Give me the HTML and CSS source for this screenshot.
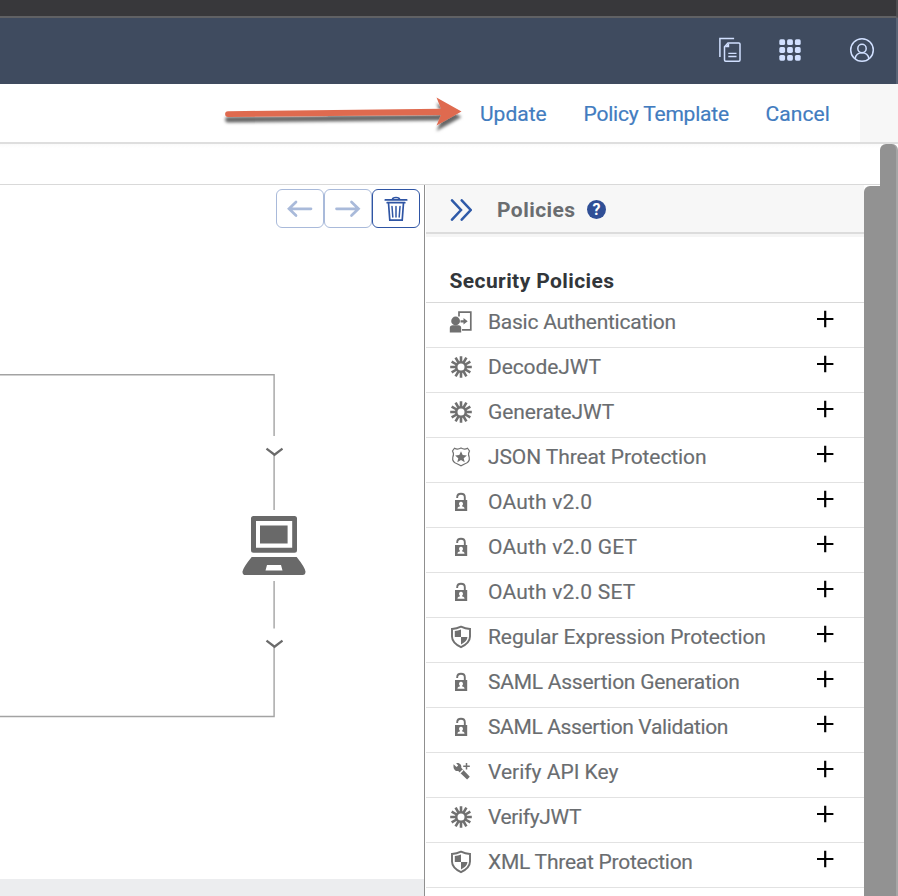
FILE: index.html
```
<!DOCTYPE html>
<html lang="en">
<head>
<meta charset="utf-8">
<title>Policy Editor</title>
<link rel="stylesheet" href="styles.css">
</head>
<body>
<svg class="defs" width="0" height="0" aria-hidden="true">
  <symbol id="auth" viewBox="0 0 24 24"><path d="M10 6.500V2.200h11.800v17.600H13" fill="none" stroke="currentColor" stroke-width="1.700"/><circle cx="6.600" cy="11" r="4.400"/><path d="M.8 22.500V18c0-2 1.200-2.800 3-2.800h5.700c1.700 0 2.700.8 2.700 2.800v4.500zM11.500 10.200h3V8l4.200 3.300-4.200 3.300v-2.200h-3z"/></symbol>
  <symbol id="burst" viewBox="0 0 24 24"><circle cx="12" cy="12" r="4.800" fill="none" stroke="currentColor" stroke-width="2.600"/><path d="M12 1.200V7M12 17v5.800M1.200 12H7M17 12h5.800M6.600 2.650l2.900 5M14.500 16.350l2.900 5M17.400 2.650l-2.900 5M9.500 16.350l-2.900 5M2.650 6.600l5 2.900M16.350 14.500l5 2.900M21.350 6.600l-5 2.900M7.650 14.500l-5 2.900" fill="none" stroke="currentColor" stroke-width="2.600"/></symbol>
  <symbol id="badge" viewBox="0 0 24 24"><path d="M5.500 3.200Q8.500 5 12 3q3.500 2 6.500.2L20.500 6q-1.800 2.700-.3 6.300c.8 3.700-1.600 5.600-4.700 6.700L12 20.800 8.500 19c-3.100-1.100-5.500-3-4.700-6.700Q5.300 8.700 3.500 6z" fill="none" stroke="currentColor" stroke-width="1.200"/><path d="m12 6.300 1.700 3.700 4.200.4-3.200 2.800 1 4-3.700-2.100-3.700 2.100 1-4-3.200-2.800 4.200-.4z"/></symbol>
  <symbol id="lock" viewBox="0 0 24 24"><path d="M8.200 8V7.200c0-4.700 7.600-4.700 7.600 0V10" fill="none" stroke="currentColor" stroke-width="1.900"/><path fill-rule="evenodd" d="M6 10h12.200v11H6zM12 11.800a2 2 0 0 0-1.200 3.600v1.200c-1.600.2-2.300.8-2.300 2.200h7c0-1.400-.7-2-2.300-2.200v-1.200a2 2 0 0 0-1.200-3.600z"/></symbol>
  <symbol id="shield" viewBox="0 0 24 24"><path d="M12 1.700q4.300 2.100 9 2.300v7.500c0 5.500-4.500 8.500-9 10.700-4.500-2.200-9-5.200-9-10.700V4q4.700-.2 9-2.300z" fill="none" stroke="currentColor" stroke-width="1.900"/><path d="M5.800 6q3.200-.3 6.200-1.500V12H5.800zM12 12h6.400c-.2 3.800-3.200 5.800-6.400 7.400z"/></symbol>
  <symbol id="tools" viewBox="0 0 24 24"><path d="M4.600 4.200 7.500 7l1.700-1.600-2-2.200c2.700-.6 5.600 1 5.100 4.500l8.500 9-2.700 2.900-8.900-8.700c-2.800.6-5.400-1.600-4.600-6.700z"/><path d="M17.500 3v6.600M14.200 6.300h6.600" stroke="currentColor" stroke-width="1.500"/><path d="m11 13 3-3" stroke="#fff" stroke-width="1.500"/></symbol>
  <symbol id="plus" viewBox="0 0 18 18"><path d="M9.200 .8v16.400M1 9h16.400" stroke="#000" stroke-width="2.200"/></symbol>
</svg>
<div class="window-bar"></div>
<header class="shell">
  <svg width="24" height="26" viewBox="0 0 24 26"><path d="M.9 20V1.400h14.200M9 5.900h10.800q1.200 0 1.200 1.200v16q0 1.200-1.200 1.200H6.700q-1.200 0-1.200-1.200V9.700z" fill="none" stroke="currentColor" stroke-width="1.500"/><path d="M10.200 5.900v4.300H5.500z"/><path d="M9.300 16.300h8.200M9.300 19.500h8.200" stroke="currentColor" stroke-width="1.300"/></svg>
  <svg class="grid-icon" width="22" height="22" viewBox="0 0 22 22"><rect x=".3" y=".3" width="5.800" height="5.800" rx="1.600"/><rect x="8.100" y=".3" width="5.800" height="5.800" rx="1.600"/><rect x="15.900" y=".3" width="5.800" height="5.800" rx="1.600"/><rect x=".3" y="8.100" width="5.800" height="5.800" rx="1.600"/><rect x="8.100" y="8.100" width="5.800" height="5.800" rx="1.600"/><rect x="15.900" y="8.100" width="5.800" height="5.800" rx="1.600"/><rect x=".3" y="15.900" width="5.800" height="5.800" rx="1.600"/><rect x="8.100" y="15.900" width="5.800" height="5.800" rx="1.600"/><rect x="15.900" y="15.900" width="5.800" height="5.800" rx="1.600"/></svg>
  <svg class="user-icon" width="26" height="26" viewBox="0 0 26 26"><circle cx="13" cy="13" r="11.300"/><circle cx="13" cy="11.500" r="4.200"/><path d="M6 21.800q1.200-6 7-6t7 6"/></svg>
</header>
<nav class="actions">
  <div class="actions-main">
    <svg class="arrow" width="250" height="48" viewBox="0 0 250 48"><defs><filter id="sh" x="-5%" y="-30%" width="110%" height="180%"><feDropShadow dx="0" dy="5.500" stdDeviation="1.400" flood-color="#000" flood-opacity=".6"/></filter></defs><path filter="url(#sh)" fill="#df6b50" d="M8 19.200 221 16.700 216.500 5.500 241.500 19.500 216.500 33.500 221 23 8 25a2.900 2.900 0 0 1 0-5.800z"/></svg>
    <a class="update">Update</a><a class="template">Policy Template</a><a class="cancel">Cancel</a>
  </div>
</nav>
<main class="workspace">
  <div class="page">
    <div class="strip"></div>
    <div class="editor">
      <section class="canvas">
        <div class="buttons">
          <button class="off"><svg width="26" height="20" viewBox="0 0 26 20"><path d="M9 3 2 9.800l7 6.700M2 9.800h22"/></svg></button>
          <button class="off"><svg width="26" height="20" viewBox="0 0 26 20"><path d="m16.500 3 7 6.800-7 6.700M23.500 9.800h-22"/></svg></button>
          <button><svg width="24" height="26" viewBox="0 0 24 26"><path d="M1.300 3.900h21.400M8.500 3.500q0-2 3.500-2t3.500 2" stroke-width="1.700"/><path d="M3.200 6.700h17.600M4.500 7l1.300 17.200h12.400L19.500 7" stroke-width="1.700"/><path d="m8 10.500.8 10.500M12 10.500V21M16 10.500 15.200 21" stroke-width="1.500"/></svg></button>
        </div>
        <svg class="flow" width="424" height="650" viewBox="0 229 424 650">
          <path d="M0 374.700h274.100V436M274.100 455v55M274.100 581v47.500M274.100 647v69.500H0" fill="none" stroke="#a3a3a3" stroke-width="1.400"/>
          <path d="m266.500 448.700 8 6 8-6M266.500 640.700l8 6 8-6" fill="none" stroke="#6b6b6b" stroke-width="2.300"/>
          <g fill="#696969"><path fill-rule="evenodd" d="M253.500 516h41q2.500 0 2.500 2.500v31.700q0 2.500-2.500 2.500h-41q-2.500 0-2.500-2.500v-31.700q0-2.500 2.500-2.500zM256 521v26.700h36.200V521z"/><path d="M260 525.500h27.600v18H260z"/><path fill-rule="evenodd" d="M251.700 557h45q8 10 8.800 14.500 0 3.500-3 3.500h-57q-3.200 0-3-3.500 1-4.500 9.200-14.500zM267 565l-1.500 5.500h17l-1.500-5.500z"/></g>
        </svg>
        <div class="canvas-foot"></div>
      </section>
      <aside class="panel">
        <div class="panel-head">
          <svg class="collapse" width="22" height="22" viewBox="0 0 22 22"><path d="m2 1.300 9 9.700-9 9.700M11.700 1.300l9 9.700-9 9.700"/></svg>
          <h2>Policies</h2><span class="help">?</span>
        </div>
        <h3>Security Policies</h3>
        <ul>
          <li><svg class="ico"><use href="#auth"/></svg><span class="tight">Basic Authentication</span><svg class="add"><use href="#plus"/></svg></li>
          <li><svg class="ico"><use href="#burst"/></svg><span class="snug">DecodeJWT</span><svg class="add"><use href="#plus"/></svg></li>
          <li><svg class="ico"><use href="#burst"/></svg><span class="snug">GenerateJWT</span><svg class="add"><use href="#plus"/></svg></li>
          <li><svg class="ico"><use href="#badge"/></svg><span class="snug">JSON Threat Protection</span><svg class="add"><use href="#plus"/></svg></li>
          <li><svg class="ico"><use href="#lock"/></svg><span class="loose">OAuth v2.0</span><svg class="add"><use href="#plus"/></svg></li>
          <li><svg class="ico"><use href="#lock"/></svg><span class="loose">OAuth v2.0 GET</span><svg class="add"><use href="#plus"/></svg></li>
          <li><svg class="ico"><use href="#lock"/></svg><span class="loose">OAuth v2.0 SET</span><svg class="add"><use href="#plus"/></svg></li>
          <li><svg class="ico"><use href="#shield"/></svg><span class="snug">Regular Expression Protection</span><svg class="add"><use href="#plus"/></svg></li>
          <li><svg class="ico"><use href="#lock"/></svg><span class="tight">SAML Assertion Generation</span><svg class="add"><use href="#plus"/></svg></li>
          <li><svg class="ico"><use href="#lock"/></svg><span class="tighter">SAML Assertion Validation</span><svg class="add"><use href="#plus"/></svg></li>
          <li><svg class="ico"><use href="#tools"/></svg><span>Verify API Key</span><svg class="add"><use href="#plus"/></svg></li>
          <li><svg class="ico"><use href="#burst"/></svg><span class="tighter">VerifyJWT</span><svg class="add"><use href="#plus"/></svg></li>
          <li><svg class="ico"><use href="#shield"/></svg><span class="tight">XML Threat Protection</span><svg class="add"><use href="#plus"/></svg></li>
        </ul>
      </aside>
      <div class="inner-scroll"></div>
    </div>
  </div>
  <div class="outer-scroll"></div>
</main>
</body>
</html>
```
FILE: styles.css
```
* { box-sizing: border-box; }
body { margin: 0; height: 896px; overflow: hidden; display: flex; flex-direction: column; background: #fff; font-family: Roboto, "Liberation Sans", sans-serif; color: #6a6d70; }
svg { flex: none; display: block; fill: currentColor; }
.defs { position: absolute; }
.window-bar { flex: none; height: 18px; background: #38383b; border-bottom: 2px solid #606164; border-right: 2px solid #4d4d50; }
.shell { flex: none; height: 66px; background: #3f4b5f; border-right: 2px solid #596476; display: flex; align-items: center; justify-content: flex-end; padding: 0 21px 2px 0; color: #d1e0ff; }
.grid-icon { margin-left: 36px; }
.user-icon { margin-left: 48px; fill: none; stroke: currentColor; stroke-width: 1.500; }
.actions { flex: none; height: 60px; background: #f7f7f7; border-bottom: 2px solid #dedede; }
.actions-main { width: 860px; height: 58px; background: #fff; display: flex; align-items: center; justify-content: flex-end; padding-right: 30px; font-size: 21px; color: #427cbf; -webkit-text-stroke: .2px; }
.actions-main a { white-space: nowrap; padding-top: 2px; }
.arrow { margin: 5px 10px 0 0; }
.update { width: 103.500px; }
.template { width: 182px; letter-spacing: -.2px; }
.cancel { width: 64.500px; letter-spacing: .1px; }
.workspace { flex: 1; display: flex; min-height: 0; }
.page { width: 880px; display: flex; flex-direction: column; }
.strip { flex: none; height: 41px; border-bottom: 1px solid #d9d9d9; background: linear-gradient(#fafafa, #fff 4px); }
.editor { flex: 1; display: flex; min-height: 0; }
.canvas { width: 424px; display: flex; flex-direction: column; }
.buttons { height: 44px; padding: 4px 4px 0; display: flex; justify-content: flex-end; }
button { width: 48px; height: 39px; padding: 0; background: #fff; border: 1.500px solid #2f55a4; border-radius: 6px; display: flex; align-items: center; justify-content: center; color: #2f55a4; }
button svg { fill: none; stroke: currentColor; stroke-width: 2.700; stroke-linecap: round; }
.off { border-color: #a9bada; color: #a9bada; }
.flow { height: 650px; }
.canvas-foot { flex: 1; background: #ecedef; }
.panel { width: 440px; border-left: 1px solid #8f8f8f; display: flex; flex-direction: column; }
.panel-head { flex: none; height: 52px; background: #f7f7f7; display: flex; align-items: center; padding: 0 0 3px 24px; margin-left: 1px; box-shadow: inset 0 -3px #f5f5f5, inset 0 -5px #dcdcdc; }
.collapse { fill: none; stroke: #2f5aa8; stroke-width: 2.500; stroke-linecap: round; }
h2, h3, ul { margin: 0; padding: 0; }
h2 { font-size: 21px; margin-left: 25px; width: 90px; letter-spacing: .45px; }
.help { width: 19px; height: 19px; border-radius: 50%; background: #304f96; color: #fff; font-size: 16px; font-weight: 700; line-height: 20px; text-align: center; }
h3 { flex: none; height: 66px; padding: 31px 0 0 23.500px; font-size: 21px; line-height: 26px; letter-spacing: .4px; color: #32363a; border-bottom: 1px solid #d9d9d9; margin-left: 1px; }
ul { list-style: none; margin-left: 1px; }
li { height: 45px; border-bottom: 1px solid #e2e2e2; display: flex; padding: 0 30px 0 23px; }
li span { flex: 1; font-size: 21px; line-height: 26px; padding: 6px 0 0 15px; white-space: nowrap; -webkit-text-stroke: .15px; }
.snug { letter-spacing: -.1px; }
.tight { letter-spacing: -.25px; }
.tighter { letter-spacing: -.37px; }
.loose { letter-spacing: .2px; }
.ico { width: 24px; height: 24px; margin-top: 7px; color: #707070; }
.add { width: 18px; height: 18px; margin-top: 7px; }
.inner-scroll { width: 16px; margin-top: 1px; background: #929292; border-radius: 6px 0 0 0; }
.outer-scroll { width: 18px; background: #929292; border-radius: 6px 6px 0 0; border-right: 2px solid #a6a6a6; }
```
